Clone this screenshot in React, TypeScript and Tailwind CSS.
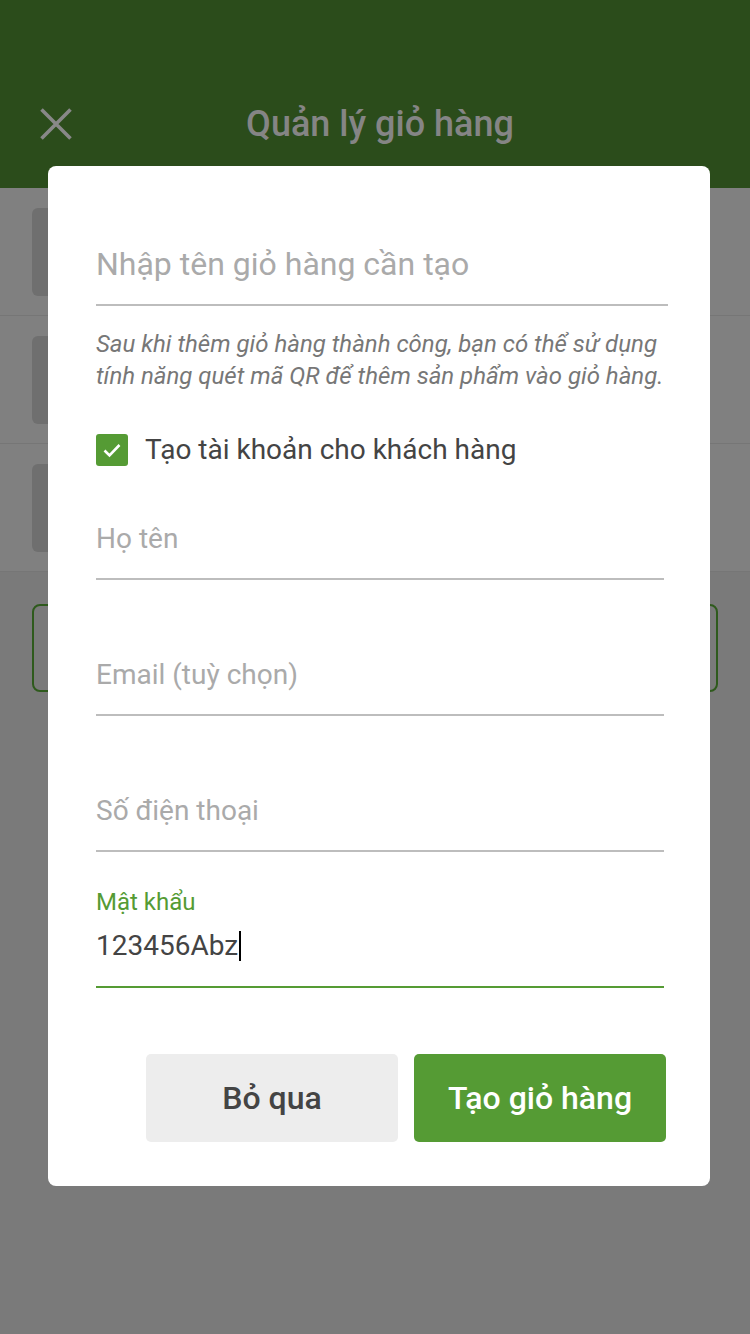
import React from "react";

export default function App() {
  const font = { fontFamily: "Roboto, 'Noto Sans', sans-serif" };
  return (
    <div className="relative w-[750px] h-[1334px] overflow-hidden bg-[#7a7a7a]" style={font}>
      {/* background page (dimmed) */}
      <div className="h-[188px] bg-[#2b4c1b] flex items-end pb-[44px]">
        <div className="flex items-center w-full h-[40px]">
          <svg className="ml-[40px] shrink-0" width="32" height="32" viewBox="0 0 32 32">
            <path d="M1.5 1.5 L30.5 30.5 M30.5 1.5 L1.5 30.5" stroke="#888888" strokeWidth="3.6" strokeLinecap="butt" />
          </svg>
          <div className="flex-1 text-center text-[36px] leading-[40px] font-medium text-[#858585] pr-[62px]">Quản lý giỏ hàng</div>
        </div>
      </div>
      <div className="bg-[#808080]">
        {[0, 1, 2].map((i) => (
          <div key={i} className="h-[128px] border-b border-[#767676] px-[32px] pt-[20px]">
            <div className="w-[88px] h-[88px] rounded-[6px] bg-[#6f6f6f]" />
          </div>
        ))}
      </div>
      <div className="px-[32px] pt-[32px]">
        <div className="h-[88px] rounded-[8px] border-2 border-[#2e5a1c]" />
      </div>

      {/* modal */}
      <div className="absolute left-[48px] top-[166px] w-[662px] h-[1020px] bg-white rounded-[8px] pl-[48px] pr-[42px] pt-[48px] flex flex-col">
        <div className="h-[92px] flex items-end pb-[22px] border-b-2 border-[#bdbdbd]">
          <span className="text-[32px] leading-[36px] text-[#aaaaaa]">Nhập tên giỏ hàng cần tạo</span>
        </div>
        <p className="mt-[22px] text-[24px] leading-[32px] italic text-[#777777] whitespace-nowrap">
          Sau khi thêm giỏ hàng thành công, bạn có thể sử dụng
          <br />
          tính năng quét mã QR để thêm sản phẩm vào giỏ hàng.
        </p>
        <div className="mt-[42px] flex items-center h-[32px]">
          <div className="w-[32px] h-[32px] rounded-[3px] bg-[#559b34] flex items-center justify-center">
            <svg width="24" height="24" viewBox="0 0 24 24">
              <path d="M4.5 12.5 L9.5 17.5 L19.5 7" fill="none" stroke="white" strokeWidth="2.6" />
            </svg>
          </div>
          <span className="ml-[17px] text-[28px] leading-[32px] text-[#444444]">Tạo tài khoản cho khách hàng</span>
        </div>
        <div className="mr-[4px] h-[114px] flex items-end pb-[23px] border-b-2 border-[#bdbdbd]">
          <span className="text-[28px] leading-[32px] text-[#aaaaaa]">Họ tên</span>
        </div>
        <div className="mr-[4px] h-[136px] flex items-end pb-[23px] border-b-2 border-[#bdbdbd]">
          <span className="text-[28px] leading-[32px] text-[#aaaaaa]">Email (tuỳ chọn)</span>
        </div>
        <div className="mr-[4px] h-[136px] flex items-end pb-[23px] border-b-2 border-[#bdbdbd]">
          <span className="text-[28px] leading-[32px] text-[#aaaaaa]">Số điện thoại</span>
        </div>
        <div className="mr-[4px] h-[136px] flex flex-col justify-end pb-[22px] border-b-2 border-[#559b34]">
          <span className="text-[24px] leading-[28px] text-[#559b34]">Mật khẩu</span>
          <div className="mt-[12px] flex items-center h-[36px]">
            <span className="text-[28px] leading-[36px] text-[#444444]">123456Abz</span>
            <span className="ml-[1px] w-[2px] h-[30px] bg-black" />
          </div>
        </div>
        <div className="mt-[66px] flex justify-end gap-[16px] mr-[2px]">
          <button className="w-[252px] h-[88px] rounded-[5px] bg-[#ededed] text-[32px] font-medium text-[#444444]">Bỏ qua</button>
          <button className="w-[252px] h-[88px] rounded-[5px] bg-[#559b34] text-[32px] font-medium text-white">Tạo giỏ hàng</button>
        </div>
      </div>
    </div>
  );
}
